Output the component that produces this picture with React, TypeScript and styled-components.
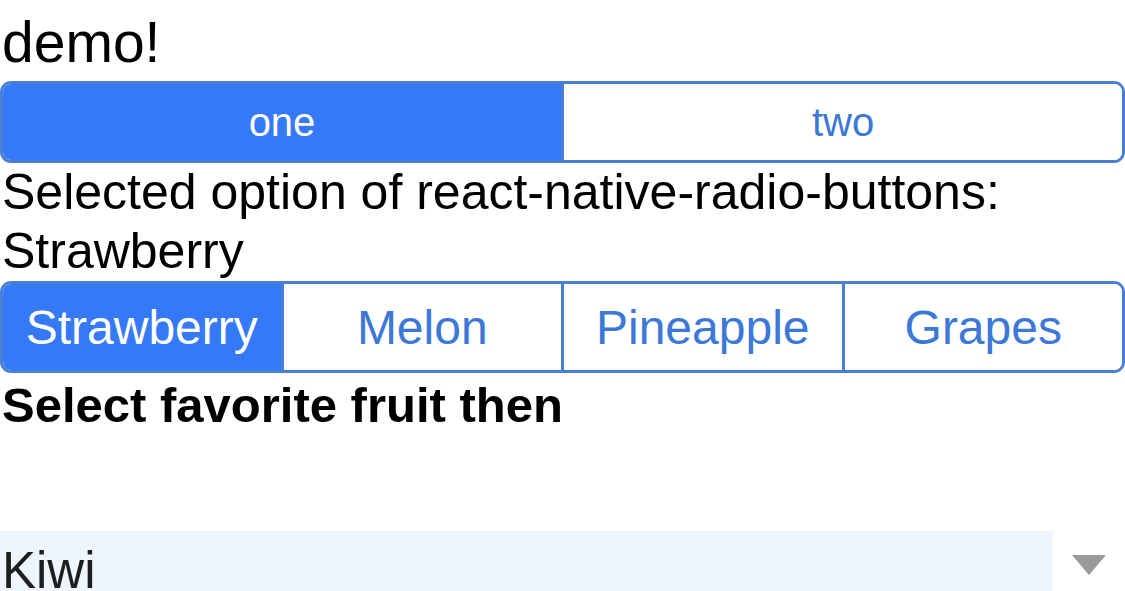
import React, { useState } from "react";
import styled, { createGlobalStyle } from "styled-components";

const GlobalStyle = createGlobalStyle`
  html, body {
    margin: 0;
    padding: 0;
    background: #ffffff;
    font-family: "Liberation Sans", Arial, sans-serif;
    color: #000;
    overflow: hidden;
  }
`;

const BLUE = "#3579f6";
const BORDER = "#4a7fd6";
const TEXT_BLUE = "#3b78d8";

/* ---------------- Page ---------------- */

const Page = styled.div`
  width: 1125px;
  height: 591px;
  display: flex;
  flex-direction: column;
`;

const Title = styled.div`
  height: 81px;
  box-sizing: border-box;
  padding: 13px 0 0 2px;
  font-size: 57px;
  line-height: 58px;
`;

const Body = styled.div`
  font-size: 50px;
  line-height: 59px;
  padding-left: 2px;
`;

const Label = styled.div`
  font-size: 49px;
  font-weight: 700;
  line-height: 56px;
  height: 158px;
  padding: 4px 0 0 2px;
  box-sizing: border-box;
`;

/* ---------------- Segmented control ---------------- */

const Segments = styled.div<{ $height: number }>`
  display: flex;
  height: ${(p) => p.$height}px;
  box-sizing: border-box;
  border: 3px solid ${BORDER};
  border-radius: 11px;
  overflow: hidden;
`;

const Segment = styled.button<{ $active: boolean; $size: number }>`
  flex: 1;
  margin: 0;
  padding: 0;
  border: none;
  border-left: 3px solid ${BORDER};
  background: ${(p) => (p.$active ? BLUE : "#fff")};
  color: ${(p) => (p.$active ? "#fff" : TEXT_BLUE)};
  font-family: "Liberation Sans", Arial, sans-serif;
  font-size: ${(p) => p.$size}px;
  cursor: pointer;
  display: flex;
  align-items: center;
  justify-content: center;

  &:first-child {
    border-left: none;
  }
`;

/* ---------------- Picker ---------------- */

const PickerRow = styled.div`
  display: flex;
  align-items: flex-start;
  height: 60px;
`;

const PickerValue = styled.div`
  width: 1053px;
  height: 60px;
  background: #eff5fd;
  color: #1e1e1e;
  font-size: 51px;
  line-height: 60px;
  padding: 10px 0 0 2px;
  box-sizing: border-box;
  overflow: hidden;
`;

const Caret = styled.div`
  flex: 1;
  display: flex;
  justify-content: center;
  padding-top: 24px;
`;

const Arrow = () => (
  <svg width="34" height="20" viewBox="0 0 34 20">
    <polygon points="0,0 34,0 17,20" fill="#9a9a9a" />
  </svg>
);

const fruits = ["Strawberry", "Melon", "Pineapple", "Grapes"];

export default function App() {
  const [tab, setTab] = useState(0);
  const [fruit, setFruit] = useState("Strawberry");

  return (
    <>
      <GlobalStyle />
      <Page>
        <Title>demo!</Title>

        <Segments $height={82}>
          {["one", "two"].map((label, i) => (
            <Segment key={label} $active={tab === i} $size={40} onClick={() => setTab(i)}>
              {label}
            </Segment>
          ))}
        </Segments>

        <Body>
          Selected option of react-native-radio-buttons:
          <br />
          {fruit}
        </Body>

        <Segments $height={92}>
          {fruits.map((f) => (
            <Segment key={f} $active={fruit === f} $size={48} onClick={() => setFruit(f)}>
              {f}
            </Segment>
          ))}
        </Segments>

        <Label>Select favorite fruit then</Label>

        <PickerRow>
          <PickerValue>Kiwi</PickerValue>
          <Caret>
            <Arrow />
          </Caret>
        </PickerRow>
      </Page>
    </>
  );
}
